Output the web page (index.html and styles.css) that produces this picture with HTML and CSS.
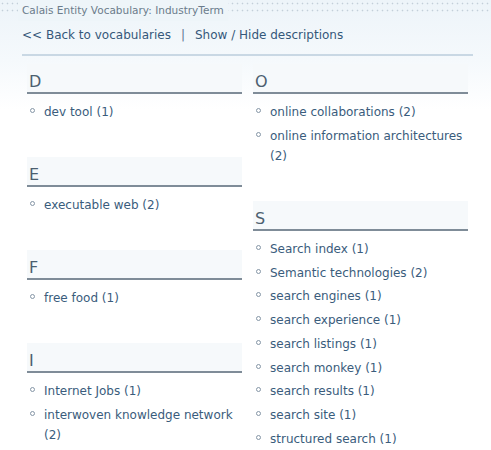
FILE: index.html
```html
<!DOCTYPE html>
<html lang="en">
<head>
    <meta charset="UTF-8">
    <meta name="viewport" content="width=device-width, initial-scale=1.0">
    <title>Calais Entity Vocabulary: IndustryTerm</title>
    <link rel="stylesheet" href="styles.css">
</head>
<body>
    <div class="title-bar">
        <span class="title">Calais Entity Vocabulary: IndustryTerm</span>
    </div>

    <div class="page">
        <div class="nav"><a href="#">&lt;&lt; Back to vocabularies</a><span class="sep">|</span><a href="#">Show / Hide descriptions</a></div>

        <div class="columns">
            <div class="column">
                <div class="letter-group">
                    <div class="letter">D</div>
                    <ul class="term-list">
                        <li><a href="#">dev tool (1)</a></li>
                    </ul>
                </div>
                <div class="letter-group">
                    <div class="letter">E</div>
                    <ul class="term-list">
                        <li><a href="#">executable web (2)</a></li>
                    </ul>
                </div>
                <div class="letter-group">
                    <div class="letter">F</div>
                    <ul class="term-list">
                        <li><a href="#">free food (1)</a></li>
                    </ul>
                </div>
                <div class="letter-group">
                    <div class="letter">I</div>
                    <ul class="term-list">
                        <li><a href="#">Internet Jobs (1)</a></li>
                        <li><a href="#">interwoven knowledge network (2)</a></li>
                    </ul>
                </div>
            </div>

            <div class="column">
                <div class="letter-group">
                    <div class="letter">O</div>
                    <ul class="term-list">
                        <li><a href="#">online collaborations (2)</a></li>
                        <li><a href="#">online information architectures (2)</a></li>
                    </ul>
                </div>
                <div class="letter-group">
                    <div class="letter">S</div>
                    <ul class="term-list">
                        <li><a href="#">Search index (1)</a></li>
                        <li><a href="#">Semantic technologies (2)</a></li>
                        <li><a href="#">search engines (1)</a></li>
                        <li><a href="#">search experience (1)</a></li>
                        <li><a href="#">search listings (1)</a></li>
                        <li><a href="#">search monkey (1)</a></li>
                        <li><a href="#">search results (1)</a></li>
                        <li><a href="#">search site (1)</a></li>
                        <li><a href="#">structured search (1)</a></li>
                    </ul>
                </div>
            </div>
        </div>
    </div>
</body>
</html>
```

FILE: styles.css
```css
html, body {
    margin: 0;
    padding: 0;
    background: #fff;
}

body {
    font-family: "DejaVu Sans", Verdana, sans-serif;
    font-size: 12px;
    color: #3a5c7c;
    background: linear-gradient(#edf4f9 0, #f5f9fc 60px, #fff 110px) no-repeat;
}

a {
    color: #3a5c7c;
    text-decoration: none;
}

.title-bar {
    height: 14px;
    margin-bottom: 11px;
    background-image: radial-gradient(circle, #c3cfd9 0.7px, transparent 1.1px);
    background-size: 5px 7px;
}

.title {
    display: inline-block;
    margin-left: 18px;
    padding: 0 4px;
    font-size: 10.5px;
    line-height: 21px;
    color: #6b7c8b;
    background: #eef5f9;
}

.page {
    padding: 0 18px 0 22px;
}

.nav {
    line-height: 20px;
    padding-bottom: 9px;
    border-bottom: 2px solid #c9d8e4;
}

.nav a {
    color: #35587a;
}

.nav .sep {
    margin: 0 10px;
    color: #5a7590;
}

.columns {
    display: grid;
    grid-template-columns: 215px 215px;
    column-gap: 11px;
    margin: 8px 0 0 5px;
}

.letter-group {
    padding-bottom: 35px;
}

.letter-group:last-child {
    padding-bottom: 0;
}

.letter {
    padding: 8px 2px 0;
    font-size: 16px;
    line-height: 20px;
    color: #4c5f70;
    background: #f6f9fb;
    border-bottom: 2px solid #7f8c98;
}

.term-list {
    list-style: none;
    margin: 8px 0 0;
    padding: 0;
}

.term-list li {
    position: relative;
    padding-left: 17px;
    line-height: 20px;
    margin-bottom: 3.75px;
}

.term-list li:last-child {
    margin-bottom: 0;
}

.term-list li::before {
    content: "";
    position: absolute;
    left: 3px;
    top: 6px;
    width: 3px;
    height: 3px;
    border: 1px solid #8596a6;
    border-radius: 50%;
}
```
